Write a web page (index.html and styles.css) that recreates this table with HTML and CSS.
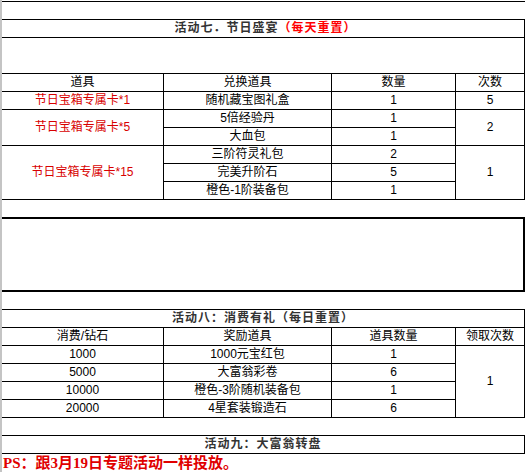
FILE: index.html
```html
<!DOCTYPE html>
<html lang="zh-CN">
<head>
<meta charset="utf-8">
<title>活动</title>
<link rel="stylesheet" href="styles.css">
</head>
<body>
<div class="sheet">
  <table class="grid">
    <colgroup><col class="c1"><col class="c2"><col class="c3"><col class="c4"></colgroup>
    <tr><td colspan="4" class="gap top"></td></tr>
    <tr><td colspan="4" class="title t7">活动七．节日盛宴<span class="hot">（每天重置）</span></td></tr>
    <tr><td colspan="4" class="spacer"></td></tr>
    <tr><td>道具</td><td>兑换道具</td><td>数量</td><td>次数</td></tr>
    <tr><td class="red">节日宝箱专属卡*1</td><td>随机藏宝图礼盒</td><td>1</td><td>5</td></tr>
    <tr><td rowspan="2" class="red">节日宝箱专属卡*5</td><td>5倍经验丹</td><td>1</td><td rowspan="2">2</td></tr>
    <tr><td>大血包</td><td>1</td></tr>
    <tr><td rowspan="3" class="red">节日宝箱专属卡*15</td><td>三阶符灵礼包</td><td>2</td><td rowspan="3">1</td></tr>
    <tr><td>完美升阶石</td><td>5</td></tr>
    <tr><td>橙色-1阶装备包</td><td>1</td></tr>
  </table>
  <div class="blank"></div>
  <div class="box"></div>
  <div class="blank"></div>
  <table class="grid">
    <colgroup><col class="c1"><col class="c2"><col class="c3"><col class="c4"></colgroup>
    <tr><td colspan="4" class="title top">活动八：消费有礼（每日重置）</td></tr>
    <tr><td>消费/钻石</td><td>奖励道具</td><td>道具数量</td><td>领取次数</td></tr>
    <tr><td>1000</td><td>1000元宝红包</td><td>1</td><td rowspan="4">1</td></tr>
    <tr><td>5000</td><td>大富翁彩卷</td><td>6</td></tr>
    <tr><td>10000</td><td>橙色-3阶随机装备包</td><td>1</td></tr>
    <tr><td>20000</td><td>4星套装锻造石</td><td>6</td></tr>
  </table>
  <div class="blank"></div>
  <div class="title9">活动九：大富翁转盘</div>
  <div class="ps">PS：跟3月19日专题活动一样投放。</div>
</div>
</body>
</html>
```

FILE: styles.css
```css
html, body {
  margin: 0;
  padding: 0;
  background: #fff;
}
body {
  width: 526px;
  height: 472px;
  overflow: hidden;
  font-family: "Liberation Sans", "Noto Sans CJK SC", sans-serif;
  font-size: 12px;
  color: #000;
}
.sheet {
  border-left: 2px solid #c4c4c4;
  height: 471px;
  padding-top: 1px;
}
.grid {
  table-layout: fixed;
  border-collapse: separate;
  border-spacing: 0;
  width: 523px;
}
.c1 { width: 162px; }
.c2 { width: 168px; }
.c3 { width: 124px; }
.c4 { width: 69px; }
.grid td {
  padding: 0;
  height: 18px;
  line-height: 17px;
  text-align: center;
  white-space: nowrap;
  border-right: 1px solid #000;
  border-bottom: 1px solid #000;
  box-sizing: border-box;
}
.grid td.top {
  border-top: 1px solid #000;
  height: 19px;
}
.grid td.gap {
  border-right: none;
}
.grid td.spacer {
  height: 36px;
}
.grid td.title {
  font-weight: bold;
  color: #333;
  letter-spacing: 1px;
}
.grid td.t7 { padding-left: 5px; }
.hot { color: #f00; }
.grid td.red { color: #d80000; }
.blank {
  height: 17px;
}
.box {
  width: 523px;
  height: 75px;
  box-sizing: border-box;
  border-top: 2px solid #000;
  border-bottom: 2px solid #000;
  border-right: 2px solid #000;
}
.title9 {
  width: 523px;
  height: 19px;
  box-sizing: border-box;
  border-top: 1px solid #000;
  border-bottom: 1px solid #000;
  border-right: 1px solid #000;
  line-height: 17px;
  text-align: center;
  font-weight: bold;
  color: #333;
  letter-spacing: 1px;
}
.ps {
  font-family: "Liberation Serif", "Noto Sans CJK SC", serif;
  font-size: 15px;
  font-weight: bold;
  color: #e00000;
  line-height: 18px;
  padding-left: 1px;
  white-space: nowrap;
}
```
